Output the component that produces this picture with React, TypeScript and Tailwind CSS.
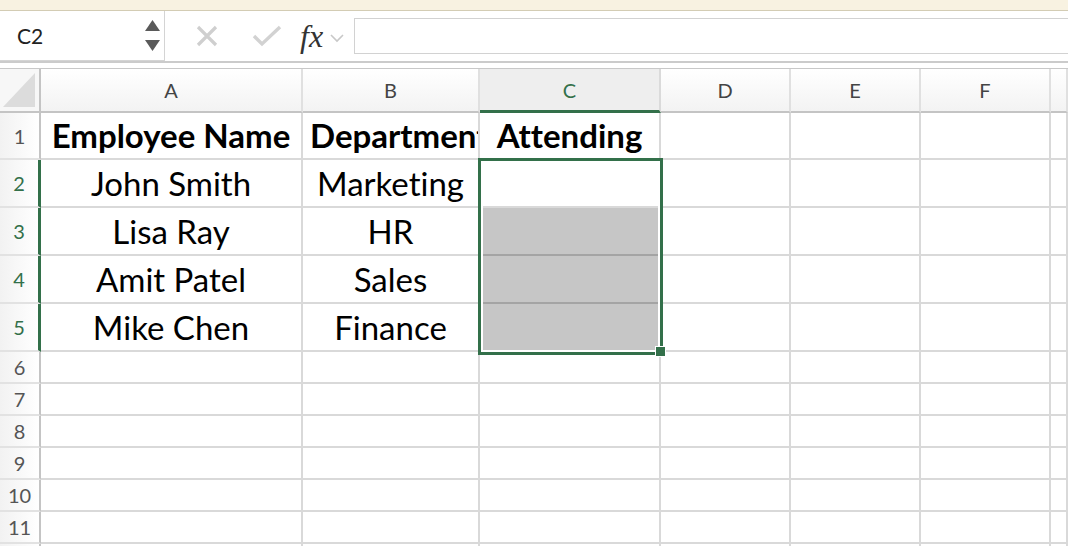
import React from 'react';

const columns = ['A', 'B', 'C', 'D', 'E', 'F', ''];

const rows: { cells: string[]; bold?: boolean; label?: boolean }[] = [
  { cells: ['Employee Name', 'Department', 'Attending'], bold: true },
  { cells: ['John Smith', 'Marketing', ''] },
  { cells: ['Lisa Ray', 'HR', ''] },
  { cells: ['Amit Patel', 'Sales', ''] },
  { cells: ['Mike Chen', 'Finance', ''] },
  { cells: [] },
  { cells: [] },
  { cells: [] },
  { cells: [] },
  { cells: [] },
  { cells: [] },
  { cells: [], label: false },
];

function FormulaBar() {
  return (
    <div className="flex h-[52px] bg-white border-b-2 border-[#cbcbcb]">
      {/* name box */}
      <div className="flex w-[165px] items-center justify-between border-r border-b border-[#d4d4d4] pl-[17px] pr-[4px]">
        <span className="text-[21px] text-[#222]">C2</span>
        <div className="flex flex-col gap-[9px]">
          <svg width="15" height="11" viewBox="0 0 15 11">
            <path d="M7.5 0 L15 11 L0 11 Z" fill="#5a5a5a" />
          </svg>
          <svg width="15" height="11" viewBox="0 0 15 11">
            <path d="M0 0 L15 0 L7.5 11 Z" fill="#5a5a5a" />
          </svg>
        </div>
      </div>

      <div className="flex items-center pl-[31px]">
        <svg width="22" height="22" viewBox="0 0 22 22">
          <path d="M2 2 L20 20 M20 2 L2 20" stroke="#cfcfcf" strokeWidth="3.2" />
        </svg>
        <svg width="30" height="22" viewBox="0 0 30 22" className="ml-[34px]">
          <path d="M2 11 L10 19 L28 2" stroke="#d2d2d2" strokeWidth="3.4" fill="none" />
        </svg>
        <span className="ml-[18px] font-['Liberation_Serif',serif] text-[32px] italic leading-none text-[#333]">
          fx
        </span>
        <svg width="14" height="9" viewBox="0 0 14 9" className="ml-[7px] mt-[4px]">
          <path d="M1 1 L7 7 L13 1" stroke="#c8c8c8" strokeWidth="1.6" fill="none" />
        </svg>
      </div>

      <div className="ml-[10px] flex flex-1 items-center py-[7px]">
        <div className="h-full w-full border-y border-l border-[#d2d2d2] bg-white" />
      </div>
    </div>
  );
}

function Grid() {
  return (
    <div className="relative mt-[5px] border-t border-[#c8c8c8]">
      <div className="grid grid-cols-[41px_262px_177px_181px_130px_130px_130px_1fr] grid-rows-[44px_47px_48px_48px_48px_48px_32px_32px_32px_32px_32px_32px_32px]">
        {/* header row */}
        <div className="relative border-r-2 border-b-2 border-[#c4c4c4] bg-[#f7f7f7]">
          <svg width="32" height="34" viewBox="0 0 32 34" className="absolute right-[4px] bottom-[4px]">
            <path d="M32 0 L32 34 L0 34 Z" fill="#dcdcdc" />
          </svg>
        </div>
        {columns.map((c, i) => {
          const active = c === 'C';
          return (
            <div
              key={i}
              className={`flex items-center justify-center border-r-2 text-[20px] ${
                active
                  ? 'bg-[#eeeeee] border-r-[#dadada] border-b-[3px] border-b-[#33704a] text-[#33704a]'
                  : 'bg-gradient-to-b from-white to-[#f3f3f3] border-b-2 border-r-[#e0e0e0] border-b-[#c4c4c4] text-[#444]'
              }`}
            >
              {c}
            </div>
          );
        })}

        {rows.map((row, r) => {
          const n = r + 1;
          const sel = n >= 2 && n <= 5;
          return (
            <React.Fragment key={r}>
              <div
                className={`flex items-center justify-center border-b-2 border-[#e2e2e2] bg-gradient-to-r from-[#f2f2f2] to-white text-[20px] ${
                  sel ? 'border-r-[3px] border-r-[#33704a] text-[#33704a]' : 'border-r-2 border-r-[#c4c4c4] text-[#555]'
                }`}
              >
                {row.label === false ? '' : n}
              </div>
              {columns.map((_, c) => {
                const text = row.cells[c] ?? '';
                const gray = c === 2 && n >= 3 && n <= 5;
                const clip = n === 1 && c === 1;
                return (
                  <div
                    key={c}
                    className={`flex items-center overflow-hidden whitespace-nowrap border-r-2 border-b-2 text-[33px] leading-none text-black [font-variant-ligatures:none] ${
                      row.bold ? 'font-bold' : ''
                    } ${clip ? 'justify-start pl-[7px]' : 'justify-center'} ${
                      gray ? 'bg-[#c6c6c6] border-r-[#d8d8d8] border-b-[#a4a4a4]' : 'bg-white border-[#d9d9d9]'
                    }`}
                  >
                    {text}
                  </div>
                );
              })}
            </React.Fragment>
          );
        })}
      </div>

      {/* selection C2:C5 */}
      <div className="pointer-events-none absolute left-[478px] top-[89px] h-[197px] w-[185px] border-[3px] border-[#33704a] shadow-[inset_0_0_0_2px_white]" />
      <div className="pointer-events-none absolute left-[655px] top-[277px] h-[11px] w-[11px] border border-white bg-[#33704a]" />
    </div>
  );
}

export default function App() {
  return (
    <div className="h-[546px] w-[1068px] overflow-hidden bg-white font-['Lato',sans-serif]">
      <div className="h-[11px] border-b border-[#d3ccb4] bg-[#f8f2e1]" />
      <FormulaBar />
      <Grid />
    </div>
  );
}
